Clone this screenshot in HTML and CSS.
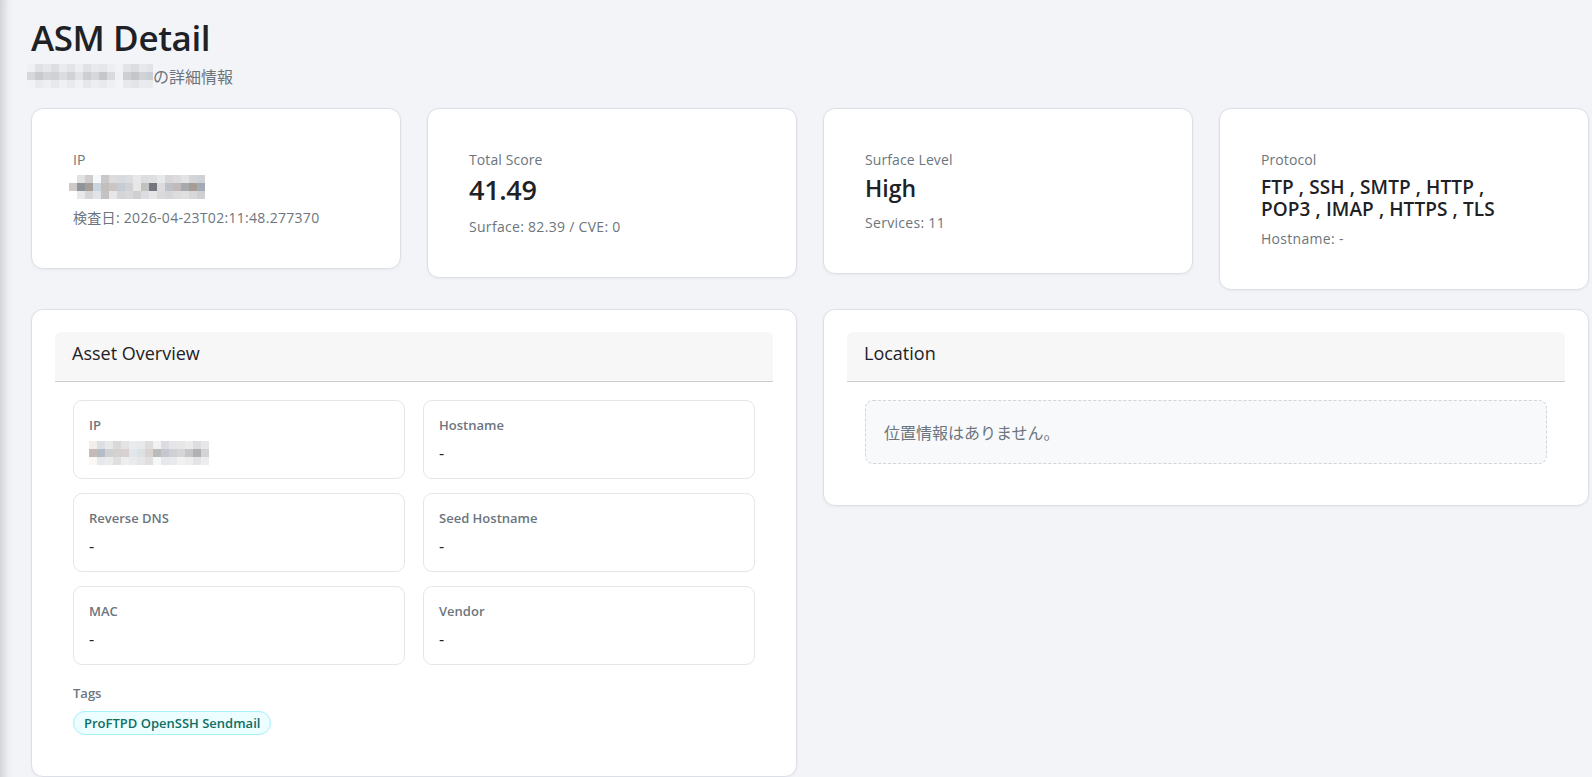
FILE: index.html
```html
<!DOCTYPE html>
<html lang="ja">
<head>
<meta charset="utf-8">
<title>ASM Detail</title>
<link rel="stylesheet" href="styles.css">
</head>
<body>
<div class="page">
  <header class="page-head">
    <h1 class="title">ASM Detail</h1>
    <p class="subtitle"><svg class="mosaic" width="126" height="24" viewBox="0 0 126 24">
      <g>
        <rect x="0" y="0" width="8" height="8" fill="#eef0f2"/><rect x="8" y="0" width="8" height="8" fill="#dfe1e4"/><rect x="16" y="0" width="8" height="8" fill="#e6e7ea"/><rect x="24" y="0" width="8" height="8" fill="#dcdee2"/><rect x="32" y="0" width="8" height="8" fill="#e9eaec"/><rect x="40" y="0" width="8" height="8" fill="#e2e4e8"/><rect x="48" y="0" width="8" height="8" fill="#eceef0"/><rect x="56" y="0" width="8" height="8" fill="#dfe1e5"/><rect x="64" y="0" width="8" height="8" fill="#e8e9ec"/><rect x="72" y="0" width="8" height="8" fill="#e5e6e9"/><rect x="80" y="0" width="8" height="8" fill="#eceef0"/><rect x="88" y="0" width="8" height="8" fill="#f1f2f5"/><rect x="96" y="0" width="8" height="8" fill="#e2e3e7"/><rect x="104" y="0" width="8" height="8" fill="#dcdde1"/><rect x="112" y="0" width="8" height="8" fill="#e6e8eb"/><rect x="120" y="0" width="6" height="8" fill="#e0e3e8"/>
        <rect x="0" y="8" width="8" height="8" fill="#d6d7da"/><rect x="8" y="8" width="8" height="8" fill="#c9cacd"/><rect x="16" y="8" width="8" height="8" fill="#d3d4d7"/><rect x="24" y="8" width="8" height="8" fill="#cfd1d5"/><rect x="32" y="8" width="8" height="8" fill="#dbdcdf"/><rect x="40" y="8" width="8" height="8" fill="#d0d2d6"/><rect x="48" y="8" width="8" height="8" fill="#e1e2e5"/><rect x="56" y="8" width="8" height="8" fill="#cdced2"/><rect x="64" y="8" width="8" height="8" fill="#d7d8db"/><rect x="72" y="8" width="8" height="8" fill="#c6c7cb"/><rect x="80" y="8" width="8" height="8" fill="#d9dadd"/><rect x="88" y="8" width="8" height="8" fill="#f0f1f4"/><rect x="96" y="8" width="8" height="8" fill="#cdcfd3"/><rect x="104" y="8" width="8" height="8" fill="#c4c6ca"/><rect x="112" y="8" width="8" height="8" fill="#cfd2d6"/><rect x="120" y="8" width="6" height="8" fill="#c9ced6"/>
        <rect x="0" y="16" width="8" height="8" fill="#f2f3f5"/><rect x="8" y="16" width="8" height="8" fill="#e9eaed"/><rect x="16" y="16" width="8" height="8" fill="#eeeff1"/><rect x="24" y="16" width="8" height="8" fill="#e7e8eb"/><rect x="32" y="16" width="8" height="8" fill="#eff0f2"/><rect x="40" y="16" width="8" height="8" fill="#e9eaed"/><rect x="48" y="16" width="8" height="8" fill="#f0f1f3"/><rect x="56" y="16" width="8" height="8" fill="#e6e7ea"/><rect x="64" y="16" width="8" height="8" fill="#edeef0"/><rect x="72" y="16" width="8" height="8" fill="#e8e9ec"/><rect x="80" y="16" width="8" height="8" fill="#eeeff2"/><rect x="88" y="16" width="8" height="8" fill="#f3f4f7"/><rect x="96" y="16" width="8" height="8" fill="#e7e8eb"/><rect x="104" y="16" width="8" height="8" fill="#e3e4e7"/><rect x="112" y="16" width="8" height="8" fill="#eaebee"/><rect x="120" y="16" width="6" height="8" fill="#e8eaee"/>
      </g>
    </svg><span>の詳細情報</span></p>
  </header>

  <section class="stats">
    <div class="card">
      <div class="card-label">IP</div>
      <div class="card-value card-value-ip"><svg class="mosaic" width="136" height="24" viewBox="0 0 136 24">
        <rect x="8" y="0" width="8" height="8" fill="#e2e2e4"/><rect x="16" y="0" width="8" height="8" fill="#cfcccd"/><rect x="24" y="0" width="8" height="8" fill="#f7f8fa"/><rect x="32" y="0" width="8" height="8" fill="#cbc8c9"/><rect x="40" y="0" width="8" height="8" fill="#dcdcde"/><rect x="48" y="0" width="8" height="8" fill="#d9dadd"/><rect x="56" y="0" width="8" height="8" fill="#dcdde0"/><rect x="64" y="0" width="8" height="8" fill="#e9e8e8"/><rect x="72" y="0" width="8" height="8" fill="#dcdde0"/><rect x="80" y="0" width="8" height="8" fill="#e0dfe0"/><rect x="88" y="0" width="8" height="8" fill="#e7e8ea"/><rect x="96" y="0" width="8" height="8" fill="#d9d6d8"/><rect x="104" y="0" width="8" height="8" fill="#dcdcde"/><rect x="112" y="0" width="8" height="8" fill="#e4e3e3"/><rect x="120" y="0" width="8" height="8" fill="#d4d5d8"/><rect x="128" y="0" width="8" height="8" fill="#ced1d5"/>
        <rect x="0" y="8" width="8" height="8" fill="#cec9c8"/><rect x="8" y="8" width="8" height="8" fill="#8e9499"/><rect x="16" y="8" width="8" height="8" fill="#a69e98"/><rect x="24" y="8" width="8" height="8" fill="#cbd5de"/><rect x="32" y="8" width="8" height="8" fill="#c2bfbd"/><rect x="40" y="8" width="8" height="8" fill="#c9c6c4"/><rect x="48" y="8" width="8" height="8" fill="#c6ccd3"/><rect x="56" y="8" width="8" height="8" fill="#d0d2d5"/><rect x="64" y="8" width="8" height="8" fill="#e9e7e5"/><rect x="72" y="8" width="8" height="8" fill="#c0c1c3"/><rect x="80" y="8" width="8" height="8" fill="#74777d"/><rect x="88" y="8" width="8" height="8" fill="#dcdcde"/><rect x="96" y="8" width="8" height="8" fill="#bfc1c6"/><rect x="104" y="8" width="8" height="8" fill="#c3b8ba"/><rect x="112" y="8" width="8" height="8" fill="#a7aaad"/><rect x="120" y="8" width="8" height="8" fill="#a79d94"/><rect x="128" y="8" width="8" height="8" fill="#a3acb5"/>
        <rect x="8" y="16" width="8" height="8" fill="#e8e8ea"/><rect x="16" y="16" width="8" height="8" fill="#d6d5d6"/><rect x="24" y="16" width="8" height="8" fill="#e2e3e6"/><rect x="32" y="16" width="8" height="8" fill="#c4c2c2"/><rect x="40" y="16" width="8" height="8" fill="#e6e6e7"/><rect x="48" y="16" width="8" height="8" fill="#d5d5d8"/><rect x="56" y="16" width="8" height="8" fill="#d8d8da"/><rect x="64" y="16" width="8" height="8" fill="#cfcfd1"/><rect x="72" y="16" width="8" height="8" fill="#dcdde0"/><rect x="80" y="16" width="8" height="8" fill="#e6e6e7"/><rect x="88" y="16" width="8" height="8" fill="#dadadc"/><rect x="96" y="16" width="8" height="8" fill="#d6d6d9"/><rect x="104" y="16" width="8" height="8" fill="#dcdcdf"/><rect x="112" y="16" width="8" height="8" fill="#e0e0e1"/><rect x="120" y="16" width="8" height="8" fill="#d8d8da"/><rect x="128" y="16" width="8" height="8" fill="#ced0d3"/>
      </svg></div>
      <div class="card-sub">検査日: 2026-04-23T02:11:48.277370</div>
    </div>
    <div class="card">
      <div class="card-label">Total Score</div>
      <div class="card-value card-value-score">41.49</div>
      <div class="card-sub">Surface: 82.39 / CVE: 0</div>
    </div>
    <div class="card">
      <div class="card-label">Surface Level</div>
      <div class="card-value card-value-level">High</div>
      <div class="card-sub">Services: 11</div>
    </div>
    <div class="card">
      <div class="card-label">Protocol</div>
      <div class="card-value card-value-proto">FTP , SSH , SMTP , HTTP , POP3 , IMAP , HTTPS , TLS</div>
      <div class="card-sub">Hostname: -</div>
    </div>
  </section>

  <section class="panels">
    <div class="panel">
      <div class="panel-head">Asset Overview</div>
      <div class="panel-body">
        <div class="fields">
          <div class="field">
            <div class="field-label">IP</div>
            <div class="field-value"><svg class="mosaic" width="120" height="24" viewBox="0 0 120 24">
              <rect x="0" y="0" width="8" height="8" fill="#f1eeec"/><rect x="8" y="0" width="8" height="8" fill="#dcdee3"/><rect x="16" y="0" width="8" height="8" fill="#e7e8ea"/><rect x="24" y="0" width="8" height="8" fill="#dad8d8"/><rect x="32" y="0" width="8" height="8" fill="#e5e4e4"/><rect x="40" y="0" width="8" height="8" fill="#e9ebee"/><rect x="48" y="0" width="8" height="8" fill="#e8e9eb"/><rect x="56" y="0" width="8" height="8" fill="#dedcdc"/><rect x="64" y="0" width="8" height="8" fill="#f1f1f2"/><rect x="72" y="0" width="8" height="8" fill="#dcdde2"/><rect x="80" y="0" width="8" height="8" fill="#e6e6e8"/><rect x="88" y="0" width="8" height="8" fill="#e7e7e8"/><rect x="96" y="0" width="8" height="8" fill="#ecebeb"/><rect x="104" y="0" width="8" height="8" fill="#dddde0"/><rect x="112" y="0" width="8" height="8" fill="#e6e7e9"/>
              <rect x="0" y="8" width="8" height="8" fill="#c4bab6"/><rect x="8" y="8" width="8" height="8" fill="#b4bcc7"/><rect x="16" y="8" width="8" height="8" fill="#cfd0d3"/><rect x="24" y="8" width="8" height="8" fill="#d6d1cf"/><rect x="32" y="8" width="8" height="8" fill="#d7d2d1"/><rect x="40" y="8" width="8" height="8" fill="#e1e7ec"/><rect x="48" y="8" width="8" height="8" fill="#dde1e4"/><rect x="56" y="8" width="8" height="8" fill="#d9d4d1"/><rect x="64" y="8" width="8" height="8" fill="#babcbb"/><rect x="72" y="8" width="8" height="8" fill="#c6c5d0"/><rect x="80" y="8" width="8" height="8" fill="#cfd0d5"/><rect x="88" y="8" width="8" height="8" fill="#d5d4d6"/><rect x="96" y="8" width="8" height="8" fill="#c6c6c9"/><rect x="104" y="8" width="8" height="8" fill="#b1b1b5"/><rect x="112" y="8" width="8" height="8" fill="#d3d3d5"/>
              <rect x="0" y="16" width="8" height="8" fill="#fcf8f6"/><rect x="8" y="16" width="8" height="8" fill="#e6e8ec"/><rect x="16" y="16" width="8" height="8" fill="#eaebed"/><rect x="24" y="16" width="8" height="8" fill="#e0dfdf"/><rect x="32" y="16" width="8" height="8" fill="#eeeeee"/><rect x="40" y="16" width="8" height="8" fill="#e9ebed"/><rect x="48" y="16" width="8" height="8" fill="#e6e6e8"/><rect x="56" y="16" width="8" height="8" fill="#e1dfdf"/><rect x="64" y="16" width="8" height="8" fill="#f6f7f7"/><rect x="72" y="16" width="8" height="8" fill="#e6e7ea"/><rect x="80" y="16" width="8" height="8" fill="#e9e9eb"/><rect x="88" y="16" width="8" height="8" fill="#f1f1f2"/><rect x="96" y="16" width="8" height="8" fill="#eeedee"/><rect x="104" y="16" width="8" height="8" fill="#e4e4e6"/><rect x="112" y="16" width="8" height="8" fill="#ededee"/>
            </svg></div>
          </div>
          <div class="field">
            <div class="field-label">Hostname</div>
            <div class="field-value">-</div>
          </div>
          <div class="field">
            <div class="field-label">Reverse DNS</div>
            <div class="field-value">-</div>
          </div>
          <div class="field">
            <div class="field-label">Seed Hostname</div>
            <div class="field-value">-</div>
          </div>
          <div class="field">
            <div class="field-label">MAC</div>
            <div class="field-value">-</div>
          </div>
          <div class="field">
            <div class="field-label">Vendor</div>
            <div class="field-value">-</div>
          </div>
        </div>
        <div class="tags">
          <div class="field-label">Tags</div>
          <div class="tag-list"><span class="tag">ProFTPD OpenSSH Sendmail</span></div>
        </div>
      </div>
    </div>

    <div class="panel panel-location">
      <div class="panel-head">Location</div>
      <div class="panel-body">
        <div class="empty">位置情報はありません。</div>
      </div>
    </div>
  </section>
</div>
</body>
</html>
```

FILE: styles.css
```css
html, body {
  margin: 0;
  padding: 0;
}

body {
  background: #f3f4f7;
  color: #212529;
  font-family: "Open Sans", "Noto Sans", "Noto Sans CJK JP", sans-serif;
}

.page {
  min-height: 100vh;
  box-sizing: border-box;
  padding: 16px 3px 40px 31px;
  box-shadow: inset 12px 0 10px -8px rgba(0, 0, 0, 0.16);
}

.title {
  margin: 0;
  font-size: 35px;
  line-height: 44px;
  font-weight: 600;
  letter-spacing: -0.4px;
  color: #1e2125;
}

.subtitle {
  margin: 4px 0 0 -4px;
  display: flex;
  align-items: center;
  height: 24px;
  font-family: "Noto Sans CJK JP", sans-serif;
  font-size: 16px;
  line-height: 24px;
  color: #6c757d;
}

.mosaic {
  display: block;
  flex: none;
}

.stats {
  margin-top: 20px;
  display: grid;
  grid-template-columns: repeat(4, 1fr);
  column-gap: 26px;
  align-items: start;
}

.card {
  background: #fff;
  border: 1px solid #dcdfe5;
  border-radius: 12px;
  box-shadow: 0 1px 3px rgba(20, 30, 60, 0.05);
  padding: 41px 40px 40px 41px;
}

.card-label {
  font-size: 14px;
  line-height: 20px;
  letter-spacing: 0.1px;
  color: #6c757d;
}

.card-value {
  color: #1e2125;
  margin-top: 2px;
}

.card-value-ip {
  margin: 5px 0 0 -4px;
  height: 24px;
}

.card-value-score {
  font-size: 27px;
  line-height: 36px;
  font-weight: 600;
  letter-spacing: -0.3px;
}

.card-value-level {
  font-size: 23px;
  line-height: 32px;
  font-weight: 600;
}

.card-value-proto {
  margin-top: 6px;
  max-width: 262px;
  font-size: 19px;
  line-height: 22px;
  font-weight: 600;
  letter-spacing: 0.1px;
}

.card-sub {
  margin-top: 9px;
  font-size: 14px;
  line-height: 20px;
  letter-spacing: 0.3px;
  color: #6c757d;
  font-family: "Open Sans", "Noto Sans CJK JP", sans-serif;
}

.panels {
  margin-top: 19px;
  display: grid;
  grid-template-columns: 1fr 1fr;
  column-gap: 26px;
  align-items: start;
}

.panel {
  background: #fff;
  border: 1px solid #dcdfe5;
  border-radius: 12px;
  box-shadow: 0 1px 3px rgba(20, 30, 60, 0.05);
  padding: 22px 23px 23px 23px;
}

.panel-head {
  background: #f7f7f7;
  border-radius: 6px 6px 0 0;
  border-bottom: 1px solid #cdcdcd;
  height: 50px;
  box-sizing: border-box;
  padding: 8px 17px 0 17px;
  font-size: 18px;
  line-height: 26px;
  color: #1e2125;
}

.panel-body {
  padding: 18px;
}

.fields {
  display: grid;
  grid-template-columns: 1fr 1fr;
  column-gap: 18px;
  row-gap: 14px;
}

.field {
  border: 1px solid #e4e6ea;
  border-radius: 9px;
  padding: 14px 15px 13px 15px;
}

.field-label {
  font-size: 13px;
  line-height: 20px;
  font-weight: 600;
  color: #6c757d;
}

.field-value {
  margin-top: 6px;
  font-size: 16px;
  line-height: 24px;
  color: #1e2125;
}

.tags {
  margin-top: 18px;
}

.tag-list {
  margin-top: 8px;
  display: flex;
}

.tag {
  display: inline-block;
  background: #ecfeff;
  border: 1px solid #a5f0fa;
  color: #0f6e66;
  border-radius: 12px;
  font-size: 13px;
  line-height: 22px;
  font-weight: 600;
  padding: 0 10px;
}

.empty {
  background: #f8f9fb;
  border: 1px dashed #d1d5db;
  border-radius: 8px;
  padding: 19px 18px;
  font-family: "Noto Sans CJK JP", sans-serif;
  font-size: 16px;
  line-height: 24px;
  color: #6c757d;
}
```
